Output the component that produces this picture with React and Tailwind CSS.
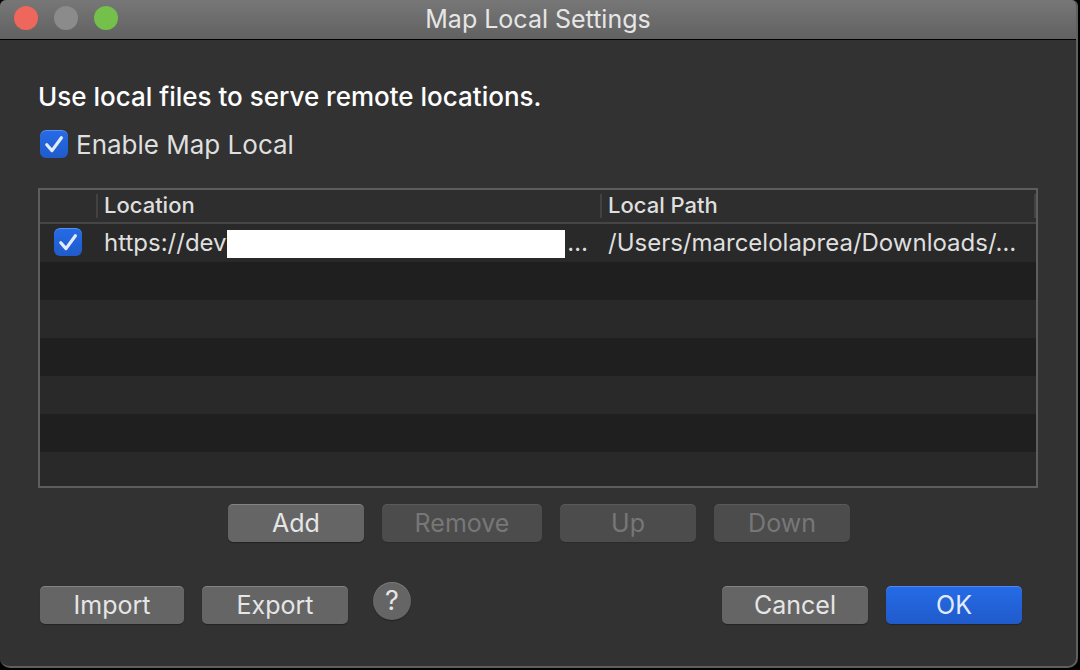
const pushButton =
  'h-[38px] shrink-0 rounded-[5px] text-[25px] leading-[38px] shadow-[0_1px_1px_rgba(0,0,0,0.3),inset_0_1px_0_rgba(255,255,255,0.2)]';
const grey = 'bg-[#656565] text-[#e6e6e6]';
const greyDisabled = 'disabled:bg-[#4c4c4c] disabled:text-[#777777] disabled:shadow-[0_1px_1px_rgba(0,0,0,0.15),inset_0_1px_0_rgba(255,255,255,0.08)]';

function CheckBox({ id, label }) {
  return (
    <span className="relative block size-7 shrink-0">
      <input
        id={id}
        type="checkbox"
        defaultChecked
        aria-label={label}
        className="peer block size-7 appearance-none rounded-[6px] bg-[#4c4c4c] shadow-[inset_0_1px_0_rgba(255,255,255,0.25)] checked:bg-linear-to-b checked:from-[#256be8] checked:to-[#205bca]"
      />
      <svg
        viewBox="0 0 28 28"
        aria-hidden="true"
        className="pointer-events-none absolute inset-0 hidden size-7 peer-checked:block"
      >
        <path
          d="M6.8 14.8 L12 20.6 L21.4 7.8"
          fill="none"
          stroke="#e2ebfb"
          strokeWidth="3.2"
          strokeLinecap="round"
          strokeLinejoin="round"
        />
      </svg>
    </span>
  );
}

function HeaderCell({ children, last }) {
  return (
    <th scope="col" className="p-0 text-left font-medium">
      <div className="flex h-[34px] items-center pb-0.5">
        <span className="h-6 w-0.5 bg-[#424242]" />
        <span className="grow pb-0.5 pl-1.5">{children}</span>
        {last && <span className="h-6 w-0.5 bg-[#424242]" />}
      </div>
    </th>
  );
}

function EmptyRow({ className }) {
  return (
    <tr aria-hidden="true" className={className}>
      <td className="p-0" colSpan={3} />
    </tr>
  );
}

export default function App() {
  return (
    <div className="flex min-h-screen bg-black pr-0.5 pb-0.5 font-['Inter','Liberation_Sans',sans-serif]">
      <div className="flex grow flex-col overflow-hidden rounded-t-[6px] rounded-b-[10px] border-r-2 border-b-2 border-[#5f5f5f] bg-[#323232]">
        <header className="grid h-10 grid-cols-[1fr_auto_1fr] items-center border-b border-black bg-linear-to-b from-[#777777] to-[#616161] pb-0.5">
          <div className="flex gap-4 pb-0.5 pl-3.5">
            <button type="button" aria-label="Close" className="size-6 rounded-full bg-[#ee665c]" />
            <button type="button" aria-label="Minimize" className="size-6 rounded-full bg-[#8b8b8b]" />
            <button type="button" aria-label="Zoom" className="size-6 rounded-full bg-[#74c04a]" />
          </div>
          <h1 className="text-[25px] leading-8 text-[#e6e6e6]">Map Local Settings</h1>
        </header>

        <main className="flex grow flex-col px-[38px] pt-[41px] pb-[42px]">
          <p className="text-[26px] leading-8 font-medium text-white">
            Use local files to serve remote locations.
          </p>
          <div className="mt-4 flex h-8 items-start gap-2 pl-0.5">
            <span className="pt-px">
              <CheckBox id="enable" />
            </span>
            <label htmlFor="enable" className="text-[26px] leading-8 text-[#dfdfdf]">
              Enable Map Local
            </label>
          </div>

          <div className="mt-[27px] border-2 border-[#5d5d5d]">
            <table className="w-full table-fixed border-collapse bg-[#292929] text-[#dfdfdf]">
              <colgroup>
                <col className="w-14" />
                <col className="w-[504px]" />
                <col />
              </colgroup>
              <thead className="bg-[#2e2e2e] text-[22px] leading-7">
                <tr className="h-[34px] shadow-[inset_0_-2px_0_#454545]">
                  <td className="p-0" />
                  <HeaderCell>Location</HeaderCell>
                  <HeaderCell last>Local Path</HeaderCell>
                </tr>
              </thead>
              <tbody className="text-[24px] leading-[38px]">
                <tr className="h-[38px]">
                  <td className="p-0 pb-0.5 pl-3.5">
                    <CheckBox label="Enable mapping" />
                  </td>
                  <td className="p-0 pr-3 pl-2">
                    <div className="flex h-[38px] items-center">
                      <span>https://dev</span>
                      <span className="mt-0.5 h-7 grow bg-white" />
                      <span className="pl-0.5">…</span>
                    </div>
                  </td>
                  <td className="p-0 pl-2 whitespace-nowrap">/Users/marcelolaprea/Downloads/…</td>
                </tr>
                <EmptyRow className="h-[38px] bg-[#1f1f1f]" />
                <EmptyRow className="h-[38px]" />
                <EmptyRow className="h-[38px] bg-[#1f1f1f]" />
                <EmptyRow className="h-[38px]" />
                <EmptyRow className="h-[38px] bg-[#1f1f1f]" />
                <EmptyRow className="h-[34px]" />
              </tbody>
            </table>
          </div>

          <div className="mt-4 flex justify-center gap-[18px] pl-0.5">
            <button type="button" className={`${pushButton} ${grey} w-[136px]`}>Add</button>
            <button type="button" disabled className={`${pushButton} ${greyDisabled} w-[160px]`}>Remove</button>
            <button type="button" disabled className={`${pushButton} ${greyDisabled} w-[136px]`}>Up</button>
            <button type="button" disabled className={`${pushButton} ${greyDisabled} w-[136px]`}>Down</button>
          </div>

          <div className="mt-10 flex items-start gap-[18px] pr-4 pl-0.5">
            <button type="button" className={`${pushButton} ${grey} mt-1 w-[144px]`}>Import</button>
            <button type="button" className={`${pushButton} ${grey} mt-1 w-[146px]`}>Export</button>
            <button
              type="button"
              aria-label="Help"
              className="ml-[7px] size-[38px] rounded-full bg-[#656565] text-[27px] leading-[38px] text-[#e6e6e6] shadow-[0_1px_1px_rgba(0,0,0,0.3),inset_0_1px_0_rgba(255,255,255,0.15)]"
            >
              ?
            </button>
            <span className="grow" />
            <button type="button" className={`${pushButton} ${grey} mt-1 w-[146px]`}>Cancel</button>
            <button
              type="button"
              className={`${pushButton} mt-1 w-[136px] bg-linear-to-b from-[#256be8] to-[#205bca] text-[#e2ebfb]`}
            >
              OK
            </button>
          </div>
        </main>
      </div>
    </div>
  );
}
